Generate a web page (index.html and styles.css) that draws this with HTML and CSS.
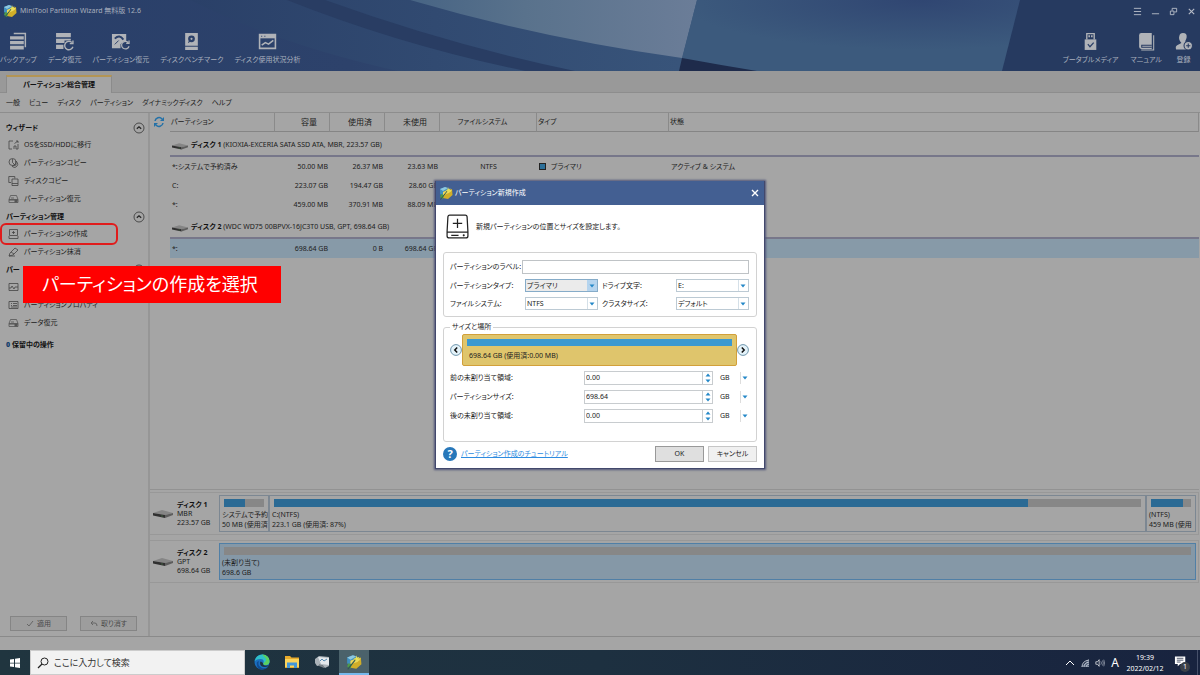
FILE: index.html
```html
<!DOCTYPE html>
<html lang="ja">
<head>
<meta charset="utf-8">
<title>MiniTool Partition Wizard</title>
<link rel="stylesheet" href="styles.css">
</head>
<body>
<svg class="defs" aria-hidden="true">
  <symbol id="logo" viewBox="0 0 14 14">
    <path d="M1 3 6 1l4 2-1 6-5 2-3-3z" fill="#3f8fc0"/><path d="M1 3 6 1l3 1-5 3z" fill="#8ec8e0"/>
    <path d="M4 6 9 4l4-1 .5 6L9 13l-5-1z" fill="#d0ae28"/><path d="M4 6 9 4l4 0-3 3-6 2z" fill="#ecd95e"/>
    <path d="M2 8l3 1-1 4-3-2z" fill="#4f9b49"/><path d="M1.500 13.500 9 4" stroke="#305a52"/><path d="M9 1l.7 2 2-.5-1.200 1.600L12 6 9.700 5.500 8.500 7.200 8.300 5 6.500 4.200l2-.8z" fill="#e8e05a"/>
  </symbol>
  <symbol id="disk" viewBox="0 0 20 9">
    <path d="M0 4 9 1l11 3-8 2z" fill="#858585"/><path d="M0 4 12 6v3L0 6.500z" fill="#303030"/><path d="M12 6l8-2v2l-8 3z" fill="#5d5d5d"/><path d="M9 6.500v1" stroke="#4c8a4c"/>
  </symbol>
  <symbol id="up" viewBox="0 0 12 12"><circle cx="6" cy="6" r="5" fill="none" stroke="#333" stroke-width=".8"/><path d="M3.800 6.800 6 4.800l2.200 2" fill="none" stroke="#222" stroke-width="1.200"/></symbol>
  <symbol id="drive" viewBox="0 0 11 10"><path d="M1 5.500 2.500 1.500h6L10 5.500v3H1v-3h9M3 4h3" fill="none" stroke="#555" stroke-width=".8"/><path d="M6.500 5.500h3v3h-3zM1 5.500h9v1H1z" fill="#555"/></symbol>
  <symbol id="tri" viewBox="0 0 6 4"><path d="M.5.500h5L3 3.500z" fill="#2488c8"/></symbol>
</svg>

<div class="screen">
<div class="app">
  <header class="hero">
    <svg class="swoosh" viewBox="0 0 1200 71" preserveAspectRatio="none" aria-hidden="true">
      <defs>
        <linearGradient id="g1"><stop offset="0" stop-color="#293f69"/><stop offset=".5" stop-color="#2d426b"/><stop offset="1" stop-color="#38567a"/></linearGradient>
        <linearGradient id="g2"><stop offset="0" stop-color="#476484"/><stop offset=".4" stop-color="#59728c"/><stop offset="1" stop-color="#6b7d98"/></linearGradient>
        <radialGradient id="g3" cx=".7" cy="0" r=".7"><stop offset="0" stop-color="#304672"/><stop offset="1" stop-color="#3c5a7d"/></radialGradient>
        <linearGradient id="g4"><stop offset="0" stop-color="#2a4068"/><stop offset="1" stop-color="#38547a"/></linearGradient>
      </defs>
      <path d="M0 0h700v71H0z" fill="url(#g1)"/>
      <path d="M190 0Q280 45 398 71H680V40L410 0z" fill="url(#g4)"/>
      <path d="M287 0Q400 45 525 71h50Q450 45 325 0z" fill="#293d63"/>
      <path d="M410 0Q540 38 682 58L697 0z" fill="url(#g2)"/>
      <path d="M697 0h325l-18 71H679z" fill="url(#g3)"/>
      <path d="M682 58Q720 65 757 71h-78z" fill="#1e2b4b"/>
      <path d="M1020 0h180v71h-198z" fill="#263a60"/>
    </svg>
    <div class="titlebar">
      <svg class="logo" aria-hidden="true"><use href="#logo"/></svg>
      <span>MiniTool Partition Wizard 無料版 12.6</span>
      <div class="winbtns">
        <button aria-label="メニュー"><svg viewBox="0 0 10 10"><path d="M1 1.500h8M1 5h8M1 8.500h8" stroke="#b9bec9"/></svg></button>
        <button aria-label="最小化"><svg viewBox="0 0 10 10"><path d="M1 7.500h8" stroke="#b9bec9"/></svg></button>
        <button aria-label="元に戻す"><svg viewBox="0 0 10 10"><path d="M1.500 4.500h4v4h-4zM3.500 4V1.500h5v4H6" fill="none" stroke="#b9bec9"/></svg></button>
        <button aria-label="閉じる"><svg viewBox="0 0 10 10"><path d="M2 2l6 6M8 2 2 8" stroke="#b9bec9" stroke-width="1.200"/></svg></button>
      </div>
    </div>
    <div class="toolrow">
    <nav class="tools">
      <button><svg viewBox="0 0 18 18"><path d="M4.500 1.500h11v13" fill="none" stroke="#b0b3b8" stroke-width="1.400"/><path d="M1 4h13v3H1zM1 8.500h13v3H1zM1 13h13v3.500H1z" fill="#b0b3b8"/></svg>バックアップ</button>
      <button><svg viewBox="0 0 18 18"><path d="M1 1h14v4H1zM1 6.500h14V8H9v2.500H1zM1 12h7v4H1z" fill="#b0b3b8"/><path d="M16 10a4 4 0 1 0 1 4M17 8v3h-3" fill="none" stroke="#b0b3b8" stroke-width="1.300"/></svg>データ復元</button>
      <button><svg viewBox="0 0 20 18"><path d="M1 1h15v8h-3l-3 3v4H1z" fill="#b0b3b8"/><path d="M4 6q5-5 9 1" fill="none" stroke="#2b4069" stroke-width="2"/><path d="M8 8 4 12" stroke="#2b4069"/><path d="M18 10a4 4 0 1 0 1 4M19 8v3h-3" fill="none" stroke="#b0b3b8" stroke-width="1.300"/></svg>パーティション復元</button>
      <button><svg viewBox="0 0 18 18"><path d="M3 1h12v12H3zM3 14h12v3H3z" fill="#b0b3b8"/><circle cx="9" cy="6.500" r="3.200" fill="#2b4069"/><path d="M9 6.500 6 10" stroke="#2b4069"/><circle cx="9" cy="6.500" r="1" fill="#b0b3b8"/></svg>ディスクベンチマーク</button>
      <button><svg viewBox="0 0 18 18"><path d="M1.500 2.500h15v13h-15z" fill="none" stroke="#b0b3b8" stroke-width="1.500"/><path d="M1 2h16v4H1z" fill="#b0b3b8"/><path d="M3 4h1M6 4h1" stroke="#2b4069"/><path d="M3.500 12.500 7 10l3 1.500L14.500 8" fill="none" stroke="#b0b3b8" stroke-width="1.500"/></svg>ディスク使用状況分析</button>
    </nav>
    <nav class="tools right">
      <button><svg viewBox="0 0 18 18"><path d="M5.500 7V1.500h7V7" fill="none" stroke="#b0b3b8" stroke-width="1.300"/><path d="M7 3h1.500v2H7zM9.500 3H11v2H9.500z" fill="#b0b3b8"/><path d="M3.500 7h11v10h-11z" fill="#b0b3b8"/><path d="M6.500 11.500 8.500 14l3.500-4" fill="none" stroke="#2b4069" stroke-width="1.200"/></svg>ブータブルメディア</button>
      <button><svg viewBox="0 0 18 18"><path d="M2 3q0-2 2-2h10v15H4q-2 0-2-2z" fill="#b0b3b8"/><path d="M14 12.500H4.500v2H14" fill="none" stroke="#263a60"/><path d="M15.800 3v14H4" fill="none" stroke="#b0b3b8"/></svg>マニュアル</button>
      <button><svg viewBox="0 0 18 18"><path d="M8.500 1q4 0 3.500 4-.3 2-1.500 4l2 1-2 5 2 1.500H2q-1-3 1-4l4-2Q4 7 5 4q.5-3 3.500-3z" fill="#b0b3b8"/><circle cx="13.500" cy="13" r="4" fill="#b0b3b8" stroke="#263a60"/><path d="M11.500 13h4M13.500 11v4" stroke="#263a60"/></svg>登録</button>
    </nav>
    </div>
  </header>

  <div class="tabs"><button class="tab">パーティション総合管理</button></div>
  <nav class="menu"><button>一般</button><button>ビュー</button><button>ディスク</button><button>パーティション</button><button>ダイナミックディスク</button><button>ヘルプ</button></nav>

  <div class="body">
    <aside class="side">
      <h2>ウィザード<svg><use href="#up"/></svg></h2>
      <button><svg viewBox="0 0 11 10"><path d="M5 1H1v8h3M10 1 6.500 3.500M8 1h2v2M6 9V6h2v3h2V4" fill="none" stroke="#444" stroke-width=".8"/></svg>OSをSSD/HDDに移行</button>
      <button><svg viewBox="0 0 11 10"><circle cx="4.500" cy="4" r="3.500" fill="none" stroke="#444" stroke-width=".8"/><path d="M4.500 1v3.500L7 7M8 3q4 4-1 6.500Q4 9 4 8l4-1z" fill="none" stroke="#444" stroke-width=".8"/></svg>パーティションコピー</button>
      <button><svg viewBox="0 0 11 10"><path d="M3 6.500H.8v-6h6v2M4 3h6v6.500H4zM4 7.500h6" fill="none" stroke="#444" stroke-width=".8"/></svg>ディスクコピー</button>
      <button><svg><use href="#drive"/></svg>パーティション復元</button>
      <h2>パーティション管理<svg><use href="#up"/></svg></h2>
      <button class="marked"><svg viewBox="0 0 11 10"><path d="M1.500.500h8v6h-8zM1 7v2.500h9V7M5.500 2v3M4 3.500h3" fill="none" stroke="#444" stroke-width=".8"/></svg>パーティションの作成</button>
      <button><svg viewBox="0 0 11 10"><path d="M1 9l1-3 5-5 3 2-5 5zM1 9h6M3 5l3 2" fill="none" stroke="#444" stroke-width=".8"/></svg>パーティション抹消</button>
      <h2>パー<svg><use href="#up"/></svg></h2>
      <button aria-label="表面テスト"><svg viewBox="0 0 11 10"><path d="M1 1.500h9v7H1zM1 6h2l1-2 2 3 1-2h3" fill="none" stroke="#444" stroke-width=".8"/></svg></button>
      <button><svg viewBox="0 0 11 10"><path d="M1 1.500h9v7H1zM3 3.500h1M5 3.500h4M3 5.500h1M5 5.500h4M3 7h6" fill="none" stroke="#444" stroke-width=".8"/></svg>パーティションプロパティ</button>
      <button><svg><use href="#drive"/></svg>データ復元</button>
      <p class="pending"><b>0</b> 保留中の操作</p>
      <div class="actions">
        <button><svg viewBox="0 0 8 8"><path d="M1 4l2 2 4-5" fill="none" stroke="#666"/></svg>適用</button>
        <button><svg viewBox="0 0 8 8"><path d="M3 1 1 3l2 2M1 3h4q2 0 2 3" fill="none" stroke="#666"/></svg>取り消す</button>
      </div>
    </aside>

    <main class="main">
      <div class="list">
        <button class="refresh" aria-label="更新"><svg viewBox="0 0 12 12"><path d="M2 5a4 4 0 0 1 7-2M10 7a4 4 0 0 1-7 2" fill="none" stroke="#2371a8" stroke-width="1.500"/><path d="M11 1v4H7zM1 11V7h4z" fill="#2371a8"/></svg></button>
        <table>
          <colgroup><col class="c-name"><col class="c-num"><col class="c-num"><col class="c-num"><col class="c-fs"><col class="c-type"><col></colgroup>
          <thead><tr><th>パーティション</th><th class="num">容量</th><th class="num">使用済</th><th class="num">未使用</th><th class="fs">ファイルシステム</th><th>タイプ</th><th>状態</th></tr></thead>
          <tbody>
            <tr class="group"><td colspan="7"><svg class="hd"><use href="#disk"/></svg><b>ディスク 1</b> (KIOXIA-EXCERIA SATA SSD ATA, MBR, 223.57 GB)</td></tr>
            <tr><td>*:システムで予約済み</td><td class="num">50.00 MB</td><td class="num">26.37 MB</td><td class="num">23.63 MB</td><td class="fs">NTFS</td><td><i class="sq"></i>プライマリ</td><td>アクティブ &amp; システム</td></tr>
            <tr><td>C:</td><td class="num">223.07 GB</td><td class="num">194.47 GB</td><td class="num">28.60 GB</td><td></td><td></td><td></td></tr>
            <tr><td>*:</td><td class="num">459.00 MB</td><td class="num">370.91 MB</td><td class="num">88.09 MB</td><td></td><td></td><td></td></tr>
            <tr class="group"><td colspan="7"><svg class="hd"><use href="#disk"/></svg><b>ディスク 2</b> (WDC WD75 00BPVX-16JC3T0 USB, GPT, 698.64 GB)</td></tr>
            <tr class="sel"><td>*:</td><td class="num">698.64 GB</td><td class="num">0 B</td><td class="num">698.64 GB</td><td></td><td></td><td></td></tr>
          </tbody>
        </table>
      </div>
      <div class="map">
        <section class="disk">
          <div class="dlabel"><svg class="hd2"><use href="#disk"/></svg><div><b>ディスク 1</b><br>MBR<br>223.57 GB</div></div>
          <div class="part small"><div class="bar"><span style="width:53%"></span></div><p>システムで予約<br>50 MB (使用済</p></div>
          <div class="part"><div class="bar"><span style="width:87%"></span></div><p>C:(NTFS)<br>223.1 GB (使用済: 87%)</p></div>
          <div class="part small"><div class="bar"><span style="width:80%"></span></div><p>(NTFS)<br>459 MB (使用</p></div>
        </section>
        <section class="disk">
          <div class="dlabel"><svg class="hd2"><use href="#disk"/></svg><div><b>ディスク 2</b><br>GPT<br>698.64 GB</div></div>
          <div class="part chosen"><div class="bar"></div><p>(未割り当て)<br>698.6 GB</p></div>
        </section>
      </div>
    </main>
  </div>
  <div class="status"></div>

  <div class="callout">パーティションの作成を選択</div>

  <div class="layer">
    <form class="dialog" role="dialog" aria-labelledby="dt">
      <div class="dtitle"><svg class="logo" aria-hidden="true"><use href="#logo"/></svg><span id="dt">パーティション新規作成</span><button type="button" aria-label="閉じる"><svg viewBox="0 0 8 8"><path d="M1 1l6 6M7 1 1 7" stroke="#fff" stroke-width="1.400"/></svg></button></div>
      <div class="intro"><svg viewBox="0 0 22 24"><path d="M3.500 1h15q1.500 0 1.700 1.500L21 17v4q0 2-2 2H3q-2 0-2-2v-4L1.800 2.500Q2 1 3.500 1zM1 17.500h20M11 4.500v9M6.500 9h9M5 20.500h7" fill="none" stroke="#222" stroke-width="1.200"/><circle cx="17" cy="20.500" r="1" fill="#222"/></svg><p>新規パーティションの位置とサイズを設定します。</p></div>
      <div class="box props">
        <div class="name"><label for="lb">パーティションのラベル:</label><input id="lb" type="text"></div>
        <label for="pt">パーティションタイプ:</label><div class="select hot"><select id="pt"><option>プライマリ</option></select><svg><use href="#tri"/></svg></div>
        <label for="dl" class="second">ドライブ文字:</label><div class="select"><select id="dl"><option>E:</option></select><svg><use href="#tri"/></svg></div>
        <label for="fs">ファイルシステム:</label><div class="select"><select id="fs"><option>NTFS</option></select><svg><use href="#tri"/></svg></div>
        <label for="cs" class="second">クラスタサイズ:</label><div class="select"><select id="cs"><option>デフォルト</option></select><svg><use href="#tri"/></svg></div>
      </div>
      <fieldset class="box sizes">
        <legend>サイズと場所</legend>
        <div class="slider">
          <button type="button" aria-label="前へ"><svg viewBox="0 0 12 12"><circle cx="6" cy="6" r="5.400" fill="#e4f3fa" stroke="#6f96ad"/><path d="M7.200 3.500 4.800 6l2.400 2.500" fill="none" stroke="#111" stroke-width="1.500"/></svg></button>
          <div class="volume"><div></div><p>698.64 GB (使用済:0.00 MB)</p></div>
          <button type="button" aria-label="次へ"><svg viewBox="0 0 12 12"><circle cx="6" cy="6" r="5.400" fill="#e4f3fa" stroke="#6f96ad"/><path d="M4.800 3.500 7.200 6 4.800 8.500" fill="none" stroke="#111" stroke-width="1.500"/></svg></button>
        </div>
        <div class="field"><label for="s1">前の未割り当て領域:</label><div class="spin"><input id="s1" type="text" value="0.00"><div><button type="button" aria-label="増やす"><svg class="flip"><use href="#tri"/></svg></button><button type="button" aria-label="減らす"><svg><use href="#tri"/></svg></button></div></div><span>GB</span><button type="button" class="unit" aria-label="単位"><svg><use href="#tri"/></svg></button></div>
        <div class="field"><label for="s2">パーティションサイズ:</label><div class="spin"><input id="s2" type="text" value="698.64"><div><button type="button" aria-label="増やす"><svg class="flip"><use href="#tri"/></svg></button><button type="button" aria-label="減らす"><svg><use href="#tri"/></svg></button></div></div><span>GB</span><button type="button" class="unit" aria-label="単位"><svg><use href="#tri"/></svg></button></div>
        <div class="field"><label for="s3">後の未割り当て領域:</label><div class="spin"><input id="s3" type="text" value="0.00"><div><button type="button" aria-label="増やす"><svg class="flip"><use href="#tri"/></svg></button><button type="button" aria-label="減らす"><svg><use href="#tri"/></svg></button></div></div><span>GB</span><button type="button" class="unit" aria-label="単位"><svg><use href="#tri"/></svg></button></div>
      </fieldset>
      <div class="dfoot"><span class="help">?</span><a href="#">パーティション作成のチュートリアル</a><button type="button" class="ok">OK</button><button type="button">キャンセル</button></div>
    </form>
  </div>
</div>

<footer class="taskbar">
  <button class="start" aria-label="スタート"><svg viewBox="0 0 12 12"><path d="M1 2.500 5 2v3.700H1zM6 1.800 11 1v4.700H6zM1 6.500h4V10L1 9.500zM6 6.500h5V11l-5-.8z" fill="#fff"/></svg></button>
  <label class="search"><svg viewBox="0 0 12 12"><circle cx="7.500" cy="4.500" r="3.500" fill="none" stroke="#222"/><path d="M5 7 1 11" stroke="#222" stroke-width="1.200"/></svg><input type="text" placeholder="ここに入力して検索" aria-label="検索"></label>
  <button class="task" aria-label="Edge"><svg viewBox="0 0 16 16"><circle cx="8" cy="8" r="7.500" fill="#1a6fc0"/><path d="M.7 7Q2 .5 8.500.500 15 1 15.500 7q0 4-4 4-3 0-2-2 1-4-3-4-4 0-5.800 2z" fill="#2fc0c8"/><path d="M8 .5Q15 1 15.500 7q0 4-4 4-3 0-2-2 4-2 2-5z" fill="#5bd060"/><path d="M5 7q-2 5 3 7 4 1 7-2-4 5-10 3-3-3-2-7z" fill="#104c92"/><path d="M9 9q-3-3-3 0 0 4 5 4 3 0 4-2-6 2-6-2z" fill="#1f3542"/></svg></button>
  <button class="task" aria-label="エクスプローラー"><svg viewBox="0 0 16 16"><path d="M1 2h5l1.500 1.500H15V14H1z" fill="#e8ab2c"/><path d="M1 5h14v8H1z" fill="#fbd45c"/><path d="M3 14V8.500h10V14h-3v-2.500H6V14z" fill="#4396d8"/></svg></button>
  <button class="task" aria-label="ディスク"><svg viewBox="0 0 16 16"><path d="M1 5 5 2l10 1v9l-4 2-3-3-5 1-2-3z" fill="#aab2b8"/><path d="M4 3l11 1v7l-8-1z" fill="#e3e8ec"/><path d="M6 7l2-2 2 2 3-2" fill="none" stroke="#568ab0"/><path d="M5 10l5 2v2l-5-2z" fill="#788188"/></svg></button>
  <button class="task active" aria-label="MiniTool"><svg><use href="#logo"/></svg></button>
  <span class="spacer"></span>
  <div class="tray">
    <svg viewBox="0 0 10 10"><path d="M1 7l4-4 4 4" fill="none" stroke="#fff"/></svg>
    <svg viewBox="0 0 10 10"><path d="M1 9 9 1v8z" fill="#52607a"/><path d="M2 9q0-6 7-7M4 9q0-4 5-5M6 9q0-2 3-3M8 8v1" fill="none" stroke="#dde2ea" stroke-width=".8"/></svg>
    <svg viewBox="0 0 12 10"><path d="M1 3.500h2L5 1v8L3 6.500H1z" fill="none" stroke="#fff" stroke-width=".8"/><path d="M7 3q1.500 2 0 4M9 2q2 3 0 6M10.500 1q2 4 0 8" fill="none" stroke="#aab2c0" stroke-width=".8"/></svg>
  </div>
  <span class="ime">A</span>
  <div class="clock">19:39<br>2022/02/12</div>
  <button class="notice" aria-label="通知"><svg viewBox="0 0 16 16"><path d="M1 1.500h11v8H6.500L4 12V9.500H1z" fill="#fff"/><path d="M3 3.500h7M3 5.500h7M3 7.500h4" stroke="#18233f" stroke-width=".8"/></svg><span>1</span></button>
</footer>
</div>
</body>
</html>
```
FILE: styles.css
```css
* { box-sizing: border-box; }
body {
  margin: 0;
  font-family: "Noto Sans", "Noto Sans CJK JP", sans-serif;
  font-size: 7px;
  line-height: 10px;
  font-feature-settings: "palt";
  color: #202020;
  background: #a5a5a5;
}
button, input, select {
  margin: 0; padding: 0; border: 0; background: none;
  font: inherit; font-feature-settings: inherit; color: inherit;
}
h2, p { margin: 0; }
svg { display: block; flex: none; }
.defs { display: none; }
.spacer { flex: 1; }
.screen { display: flex; flex-direction: column; height: 100vh; overflow: hidden; }
.app { position: relative; flex: 1; min-height: 0; display: flex; flex-direction: column; }

.hero { position: relative; height: 71px; color: #a9b0be; }
.swoosh { position: absolute; inset: 0; width: 100%; height: 100%; }
.titlebar { position: relative; display: flex; align-items: center; gap: 3px; height: 22px; padding: 0 4px 0 3px; }
.logo { width: 14px; height: 14px; }
.winbtns { display: flex; gap: 9px; margin-left: auto; }
.winbtns svg { width: 9px; height: 9px; }
.toolrow { position: relative; display: flex; justify-content: space-between; padding: 10px 7px 0 0; }
.tools { display: flex; gap: 11px; }
.right { gap: 12px; }
.tools button { display: flex; flex-direction: column; align-items: center; gap: 4px; white-space: nowrap; }
.tools svg { width: 19px; height: 19px; }

.tabs { height: 22px; padding: 4px 6px 0; background: #999; border-bottom: 1px solid #8d8d8d; }
.tab { height: 18px; width: 106px; background: #a5a5a5; border: 1px solid #8b8b8b; border-top: 2px solid #b39555; border-bottom: 0; color: #111; font-weight: 700; }
.menu { display: flex; gap: 9px; height: 20px; padding: 0 6px; border-bottom: 1px solid #8d8d8d; }

.body { flex: 1; min-height: 0; display: flex; border-bottom: 1px solid #8a8a8a; }
.side { width: 150px; display: flex; flex-direction: column; padding: 6px 3px 5px 6px; border-right: 2px solid #969696; }
.side h2 { display: flex; align-items: center; justify-content: space-between; height: 17px; font-size: 7px; color: #111; }
.side h2 svg { width: 12px; height: 12px; }
.side > button { display: flex; align-items: center; gap: 5px; height: 18px; padding-left: 2px; white-space: nowrap; }
.side > button svg { width: 11px; height: 10px; }
.side > .marked { width: 114px; margin-left: -4px; padding-left: 6px; outline: 2px solid #e01c1c; border-radius: 4px; }
.pending { padding-top: 8px; font-weight: 700; color: #111; }
.pending b { color: #14406c; }
.actions { display: flex; gap: 13px; margin: auto 0 0 4px; }
.actions button { display: flex; align-items: center; justify-content: center; gap: 3px; width: 57px; height: 15px; border: 1px solid #858585; background: #9d9d9d; color: #4a4a4a; }
.actions svg { width: 8px; height: 8px; }

.main { flex: 1; min-width: 0; display: flex; flex-direction: column; padding-right: 1px; }
.list { flex: 1; display: flex; align-items: flex-start; }
.refresh { width: 20px; height: 18px; padding-left: 3px; }
.refresh svg { width: 12px; height: 12px; }
table { flex: 1; width: 100%; table-layout: fixed; border-collapse: separate; border-spacing: 0; white-space: nowrap; }
.c-name { width: 105px; }
.c-num { width: 55px; }
.c-fs { width: 97px; }
.c-type { width: 132px; }
th { height: 19px; padding: 0 1px; font-weight: 400; text-align: left; border-right: 1px solid #8a8a8a; border-bottom: 1px solid #858585; }
td { height: 19px; padding: 0 2px; }
th.num { padding-right: 12px; font-size: 8px; }
.num { text-align: right; }
.fs { text-align: center; }
th.fs { padding-right: 12px; }
.group td { height: 25px; padding-top: 3px; border-bottom: 2px solid #77778a; }
.group b { color: #111; }
.hd { display: inline-block; width: 16px; height: 8px; margin-right: 3px; vertical-align: -3px; }
.sq { display: inline-block; width: 7px; height: 7px; margin-right: 5px; border: 1px solid #222; background: #2b6f99; vertical-align: -1px; }
.sel td { background: #879aa8; }

.map { height: 147px; padding-top: 2px; border-top: 1px solid #929292; }
.disk { display: flex; height: 43px; margin-bottom: 5px; padding: 2px; padding-left: 0; border: 1px solid #989898; border-left: 0; }
.dlabel { display: flex; align-items: center; gap: 4px; width: 69px; padding-left: 3px; line-height: 9px; white-space: nowrap; }
.dlabel b { color: #111; }
.hd2 { width: 20px; height: 9px; }
.part { flex: 1; min-width: 0; overflow: hidden; padding: 3px 4px 0 2px; border: 1px solid #7c8792; white-space: nowrap; }
.part p { line-height: 10px; padding-top: 3px; }
.part.small { flex: none; width: 50px; }
.bar { height: 8px; margin-left: 2px; background: #878787; }
.bar span { display: block; height: 100%; background: #2b6a94; }
.chosen { background: #8598a7; border-color: #507fa6; }
.status { height: 13px; }

.callout { position: absolute; left: 23px; top: 266px; width: 258px; padding: 5px 19px; background: #f00; color: #fff; font-size: 18px; line-height: 27px; white-space: nowrap; }

.layer { position: absolute; inset: 0; display: grid; place-items: center; pointer-events: none; }
.dialog { width: 330px; background: #fff; border: 1px solid #42486c; border-top: 0; box-shadow: 0 0 2px 1px #505478; pointer-events: auto; color: #222; }
.dtitle { display: flex; align-items: center; gap: 2px; height: 24px; padding: 0 5px 0 3px; background: #435f92; color: #fff; }
.dtitle button { margin-left: auto; }
.dtitle button svg { width: 8px; height: 8px; }
.intro { display: flex; align-items: center; gap: 7px; height: 47px; padding: 0 10px 4px; }
.intro svg { width: 23px; height: 25px; }
.box { margin: 0 7px; border: 1px solid #d2d2d2; border-radius: 3px; }
.props { display: grid; grid-template-columns: 75px 73px 1fr 73px; row-gap: 5px; align-items: center; padding: 7px 7px 6px 6px; white-space: nowrap; }
.props label { line-height: 13px; }
.name { grid-column: 1 / -1; display: flex; }
.name label { width: 72px; }
.name input { flex: 1; min-width: 0; height: 14px; border: 1px solid #bfc3c6; }
.second { padding-left: 4px; }
.select { position: relative; height: 13px; border: 1px solid #bccad4; background: linear-gradient(to left, transparent 9px, #d5e0e8 9px, #d5e0e8 10px, transparent 10px); }
.select select { display: block; width: 100%; height: 11px; padding: 0 1px; line-height: 11px; appearance: none; }
.select svg { position: absolute; right: 2px; top: 4px; width: 6px; height: 4px; pointer-events: none; }
.select.hot { border-color: #86acc9; background: linear-gradient(to left, #b5d4ee 10px, #ebebeb 10px); }
.sizes { margin-top: 5px; padding: 0 7px 18px 6px; min-width: 0; }
.sizes legend { padding: 0 2px; line-height: 10px; }
.slider { display: flex; align-items: center; margin-bottom: 5px; padding-top: 2px; }
.slider svg { width: 12px; height: 12px; }
.volume { flex: 1; height: 32px; padding: 4px; background: #dfc56c; border: 1px solid #d2a03a; border-radius: 2px; }
.volume div { height: 7px; background: #3b99d0; }
.volume p { padding: 5px 2px 0; }
.field { display: flex; align-items: center; height: 14px; margin-bottom: 5px; white-space: nowrap; }
.field:last-child { margin-bottom: 0; }
.field label { flex: 1; }
.spin { display: flex; width: 129px; height: 14px; border: 1px solid #c8cccf; }
.spin input { flex: 1; min-width: 0; padding: 0 1px; }
.spin > div { display: flex; flex-direction: column; width: 10px; border-left: 1px solid #c8cccf; }
.spin button { flex: 1; display: grid; place-items: center; }
.spin svg { width: 6px; height: 4px; }
.flip { transform: rotate(180deg); }
.field span { width: 27px; padding-left: 7px; }
.unit { display: grid; place-items: center; width: 9px; height: 12px; border-left: 1px solid #ddd; }
.unit svg { width: 6px; height: 4px; }
.dfoot { display: flex; align-items: center; gap: 4px; padding: 4px 7px 6px; white-space: nowrap; }
.help { width: 14px; height: 14px; border-radius: 50%; background: #2878ba; color: #fff; font-size: 11px; font-weight: 700; line-height: 14px; text-align: center; }
.dfoot a { color: #2d8be0; }
.dfoot button { width: 49px; height: 16px; border: 1px solid #c6c6c6; background: #f0f0f0; }
.dfoot .ok { margin-left: auto; border-color: #999; background: #dfdfdf; }

.taskbar { display: flex; align-items: stretch; height: 25px; background: linear-gradient(90deg, #20353f, #1d3040 50%, #18233f); color: #fff; }
.taskbar button { display: grid; place-items: center; }
.start { width: 30px; }
.start svg { width: 12px; height: 12px; }
.search { display: flex; align-items: center; gap: 5px; width: 215px; padding-left: 6px; border: 1px solid #ccc; background: #f2f2f2; }
.search svg { width: 12px; height: 12px; }
.search input { flex: 1; min-width: 0; font-size: 9px; }
.search input::placeholder { color: #333; opacity: 1; }
.task { width: 30px; border-bottom: 2px solid transparent; }
.search + .task { margin-left: 2px; }
.task svg { width: 16px; height: 16px; }
.active { margin-left: 2px; background: #4b626b; border-bottom-color: #76b9ed; }
.tray { display: flex; align-items: center; gap: 5px; }
.tray svg { width: 10px; height: 10px; }
.ime { width: 20px; font-size: 12px; line-height: 25px; text-align: center; }
.clock { width: 40px; padding-top: 2px; line-height: 11px; text-align: center; }
.notice { position: relative; width: 33px; margin-right: 2px; border-right: 1px solid #46506a; }
.notice svg { width: 15px; height: 15px; }
.notice span { position: absolute; left: 15px; top: 12px; width: 10px; height: 10px; border-radius: 50%; background: #3b4048; line-height: 10px; }
```
